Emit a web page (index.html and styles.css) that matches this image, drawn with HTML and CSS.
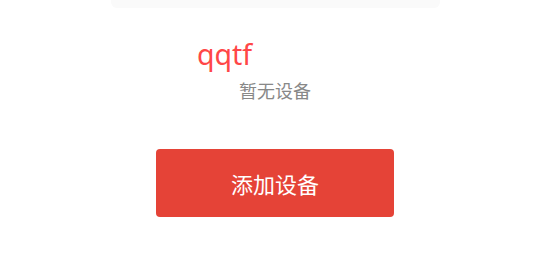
FILE: index.html
```html
<!DOCTYPE html>
<html lang="zh">
<head>
<meta charset="utf-8">
<link rel="stylesheet" href="styles.css">
</head>
<body>
<div class="page">
  <div class="topbar"></div>
  <div class="empty">
    <div class="logo-row"><span class="logo">qqtf</span></div>
    <div class="tip">暂无设备</div>
  </div>
  <button class="add">添加设备</button>
</div>
</body>
</html>
```
FILE: styles.css
```css
html, body {
  margin: 0;
  padding: 0;
  background: #ffffff;
}
.page {
  width: 550px;
  height: 275px;
  display: flex;
  flex-direction: column;
  align-items: center;
  font-family: "Noto Sans", "Noto Sans CJK SC", sans-serif;
}
.topbar {
  width: 329px;
  height: 8px;
  background: #fafafa;
  border-radius: 0 0 6px 6px;
}
.empty {
  width: 238px;
  display: flex;
  flex-direction: column;
  align-items: center;
}
.logo-row {
  align-self: stretch;
  padding-left: 41px;
  margin-top: 27px;
  height: 38px;
  line-height: 38px;
}
.logo {
  color: #ff4747;
  font-size: 28.5px;
}
.tip {
  margin-top: 5px;
  font-size: 18px;
  line-height: 24px;
  color: #888888;
  font-family: "Noto Sans CJK SC", sans-serif;
}
.add {
  margin-top: 47px;
  width: 238px;
  height: 68px;
  border: none;
  border-radius: 4px;
  background: #e54337;
  color: #ffffff;
  font-size: 22px;
  font-family: "Noto Sans CJK SC", sans-serif;
  padding: 0;
}
```
